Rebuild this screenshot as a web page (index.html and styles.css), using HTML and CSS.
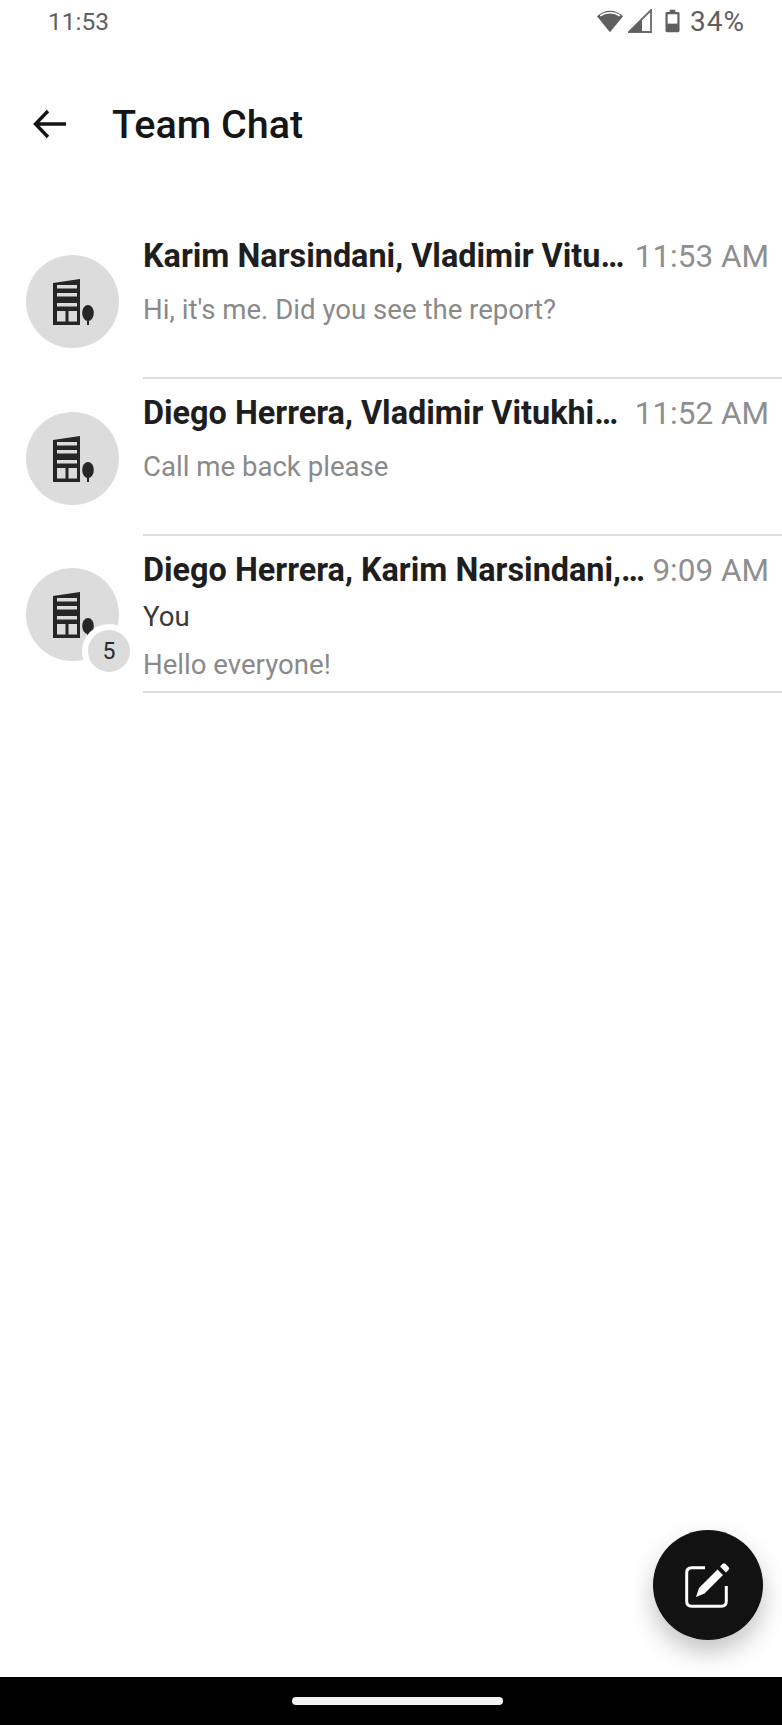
FILE: index.html
```html
<!DOCTYPE html>
<html lang="en">
<head>
    <meta charset="UTF-8">
    <title>Team Chat</title>

    <link rel="stylesheet" href="styles.css">
</head>
<body>
    <div class="status">
        <span class="clock">11:53</span>
        <div class="status-right">
            <svg class="wifi" viewBox="0 0 30 24"><path d="M15 24 L1 7 C9 -1 21 -1 29 7 Z" fill="#5f5f5f"/><path d="M4.500 6.500 C10.500 2 19.500 2 25.500 6.500" fill="none" stroke="#fff" stroke-width="1.600"/></svg>
            <svg class="signal" viewBox="0 0 24 24"><path d="M1 23 L23 1 V23 Z" fill="#fff" stroke="#6a6a6a" stroke-width="1.800"/><path d="M1 23 L14 10 V23 Z" fill="#5f5f5f"/></svg>
            <svg class="battery" viewBox="0 0 16 25"><path d="M5 0.500 H11 V3 H14 Q15.500 3 15.500 4.500 V23 Q15.500 24.500 14 24.500 H2 Q0.500 24.500 0.500 23 V4.500 Q0.500 3 2 3 H5 Z" fill="#5f5f5f"/><rect x="2.800" y="5.300" width="10.400" height="10" fill="#fff"/></svg>
            <span class="percent">34%</span>
        </div>
    </div>

    <div class="top">
        <svg class="back" viewBox="0 0 34 30"><path d="M33 15 H3 M15 2 L2.500 15 L15 28" fill="none" stroke="#151515" stroke-width="3.400"/></svg>
        <h1>Team Chat</h1>
    </div>

    <div class="list">
        <div class="row">
            <div class="avatar">
                <svg class="building" viewBox="0 0 42 46"><use href="#bld"/></svg>
            </div>
            <div class="body">
                <div class="head"><b>Karim Narsindani, Vladimir Vitu…</b><span>11:53 AM</span></div>
                <p class="snippet first">Hi, it's me. Did you see the report?</p>
            </div>
        </div>
        <div class="row">
            <div class="avatar">
                <svg class="building" viewBox="0 0 42 46"><use href="#bld"/></svg>
            </div>
            <div class="body">
                <div class="head"><b>Diego Herrera, Vladimir Vitukhi…</b><span>11:52 AM</span></div>
                <p class="snippet first">Call me back please</p>
            </div>
        </div>
        <div class="row group">
            <div class="avatar">
                <svg class="building" viewBox="0 0 42 46"><use href="#bld"/></svg>
                <div class="badge">5</div>
            </div>
            <div class="body">
                <div class="head"><b>Diego Herrera, Karim Narsindani,…</b><span>9:09 AM</span></div>
                <p class="sender">You</p>
                <p class="snippet">Hello everyone!</p>
            </div>
        </div>
    </div>

    <div class="fab">
        <svg viewBox="0 0 48 48"><path d="M21 6.700 H7.700 Q2.700 6.700 2.700 11.700 V40.300 Q2.700 45.300 7.700 45.300 H37.300 Q42.300 45.300 42.300 40.300 V25" fill="none" stroke="#fff" stroke-width="3"/><path d="M12 36 L15 27 L33.500 8.500 L39 14 L20.500 32.500 Z" fill="#fff"/><path d="M36 5.500 L38.500 3 Q40 1.500 41.500 3 L44.500 6 Q46 7.500 44.500 9 L42 11.500 Z" fill="#fff"/></svg>
    </div>

    <div class="nav"><div class="handle"></div></div>

    <svg class="defs" width="0" height="0">
        <defs>
            <g id="bld">
                <path d="M0 4 L27 0 V46 H0 Z" fill="#262626"/>
                <rect x="4" y="6" width="20" height="3.500" fill="#dcdcdc"/>
                <rect x="4" y="14" width="20" height="3.500" fill="#dcdcdc"/>
                <rect x="4" y="24" width="20" height="3.500" fill="#dcdcdc"/>
                <rect x="4" y="32" width="8.500" height="10.500" fill="#dcdcdc"/>
                <rect x="15.500" y="32" width="8.500" height="10.500" fill="#dcdcdc"/>
                <ellipse cx="35" cy="34" rx="5.800" ry="8" fill="#262626"/>
                <rect x="34" y="40" width="2" height="6" fill="#262626"/>
            </g>
        </defs>
    </svg>
</body>
</html>
```

FILE: styles.css
```css
* {box-sizing:border-box}
html,body {margin:0;padding:0;background:#fff}
body {
    width:782px;
    height:1725px;
    font-family:Roboto, "Liberation Sans", sans-serif;
    display:flex;
    flex-direction:column;
    color:#1e1e1e;
    overflow:hidden;
}
p {margin:0}
.defs {display:block}

.status {
    height:42px;
    padding:0 37px 0 48px;
    display:flex;
    align-items:center;
    justify-content:space-between;
    color:#5f5f5f;
}
.clock {font-size:24.500px}
.percent {font-size:28px;letter-spacing:1px}
.status-right {display:flex;align-items:center}
.wifi {width:28px;height:24px}
.signal {width:24px;height:24px;margin-left:4px}
.battery {width:15px;height:24px;margin-left:13px;margin-right:10px}

.top {
    height:100px;
    margin-top:32px;
    display:flex;
    align-items:center;
    padding-left:33px;
}
.back {width:34px;height:30px}
h1 {
    margin:0 0 0 45px;
    font-size:39.500px;
    font-weight:500;
    color:#161616;
}

.list {margin-top:48px}
.row {
    height:157px;
    display:flex;
    padding-left:26px;
}
.avatar {
    width:93px;
    height:93px;
    margin-top:33px;
    background:#dcdcdc;
    border-radius:50%;
    display:flex;
    align-items:center;
    justify-content:center;
    position:relative;
    flex:none;
}
.group .avatar {margin-top:32px}
.building {width:42px;height:46px;margin-left:2px}
.badge {
    position:absolute;
    left:56px;
    top:56px;
    width:54px;
    height:54px;
    border:6px solid #fff;
    border-radius:50%;
    background:#dcdcdc;
    display:flex;
    align-items:center;
    justify-content:center;
    font-size:23px;
    color:#2a2a2a;
}
.body {
    flex:1;
    min-width:0;
    margin-left:24px;
    padding:16px 13px 0 0;
    border-bottom:2px solid #dedede;
}
.head {
    display:flex;
    align-items:center;
    height:36px;
}
.head b {
    flex:1;
    min-width:0;
    font-size:32.400px;
    font-weight:700;
    white-space:nowrap;
    color:#1e1e1e;
}
.head span {font-size:31.500px;color:#8f8f8f;flex:none}
.snippet,.sender {
    font-size:27.600px;
    line-height:32px;
    color:#8a8a8a;
}
.snippet.first {margin-top:20px}
.sender {color:#3a3a3a;margin-top:13px}
.snippet {margin-top:16px}

.fab {
    position:absolute;
    left:653px;
    top:1530px;
    width:110px;
    height:110px;
    border-radius:50%;
    background:#121212;
    box-shadow:0 12px 24px rgba(0,0,0,0.24);
    display:flex;
    align-items:center;
    justify-content:center;
}
.fab svg {width:48px;height:48px}

.nav {
    margin-top:auto;
    height:48px;
    background:#000;
    display:flex;
    align-items:center;
    justify-content:center;
    padding-left:12px;
}
.handle {
    width:211px;
    height:8px;
    border-radius:4px;
    background:#f2f2f2;
}
```
